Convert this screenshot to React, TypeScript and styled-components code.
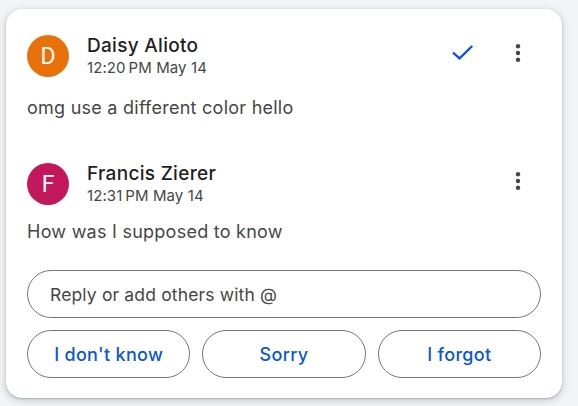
import React from 'react';
import styled, { createGlobalStyle } from 'styled-components';

const GlobalStyle = createGlobalStyle`
  html, body {
    margin: 0;
    padding: 0;
    background: #f2f4f7;
    font-family: Inter, Roboto, Arial, sans-serif;
  }
  * {
    box-sizing: border-box;
  }
`;

const Page = styled.div`
  width: 578px;
  height: 406px;
  padding: 9px 16px 0 6px;
`;

const Card = styled.div`
  width: 556px;
  height: 389px;
  background: #ffffff;
  border-radius: 16px;
  box-shadow: 0 1px 2px rgba(60, 64, 67, 0.3), 0 2px 6px 2px rgba(60, 64, 67, 0.15);
  padding: 26px 21px 20px 21px;
  display: flex;
  flex-direction: column;
`;

const Comment = styled.div<{ $gap: number }>`
  display: flex;
  flex-direction: column;
  gap: ${(p) => p.$gap}px;
  & + & {
    margin-top: 43px;
  }
`;

const Header = styled.div`
  display: flex;
  align-items: flex-start;
`;

const Avatar = styled.div<{ $color: string }>`
  width: 42px;
  height: 42px;
  border-radius: 50%;
  background: ${(p) => p.$color};
  color: #ffffff;
  font-family: Roboto, sans-serif;
  font-size: 23px;
  display: flex;
  align-items: center;
  justify-content: center;
  flex-shrink: 0;
`;

const Meta = styled.div`
  margin-left: 18px;
  margin-top: -1px;
  flex: 1;
  display: flex;
  flex-direction: column;
`;

const Name = styled.div`
  font-size: 19px;
  line-height: 24px;
  font-weight: 500;
  letter-spacing: 0.3px;
  color: #1f1f1f;
`;

const Time = styled.div`
  font-size: 15px;
  line-height: 20px;
  letter-spacing: 0.1px;
  color: #444746;
`;

const Actions = styled.div`
  display: flex;
  gap: 8px;
  margin-top: -6px;
  margin-right: -1px;
`;

const IconButton = styled.button`
  width: 48px;
  height: 48px;
  border: none;
  background: transparent;
  padding: 0;
  display: flex;
  align-items: center;
  justify-content: center;
  border-radius: 50%;
`;

const Body = styled.div`
  font-size: 18px;
  line-height: 24px;
  letter-spacing: 0.25px;
  color: #444746;
`;

const Reply = styled.div`
  margin-top: 26px;
  height: 49px;
  border: 1px solid #747775;
  border-radius: 25px;
  padding: 0 22px;
  display: flex;
  align-items: center;
  font-size: 17.5px;
  letter-spacing: 0.15px;
  color: #444746;
`;

const Suggestions = styled.div`
  margin-top: 12px;
  display: grid;
  grid-template-columns: repeat(3, 1fr);
  gap: 12px;
`;

const Chip = styled.button`
  height: 48px;
  border: 1px solid #747775;
  border-radius: 24px;
  background: #ffffff;
  font-family: inherit;
  font-size: 18px;
  font-weight: 500;
  letter-spacing: 0.3px;
  color: #0b57d0;
`;

const CheckIcon = () => (
  <svg width="24" height="24" viewBox="0 0 24 24">
    <path d="M3 11.6 L9.6 17.4 L22.2 5" fill="none" stroke="#0b57d0" strokeWidth="2.4" />
  </svg>
);

const MoreIcon = () => (
  <svg width="24" height="24" viewBox="0 0 24 24" fill="#444746">
    <circle cx="12" cy="5.2" r="2.2" />
    <circle cx="12" cy="12" r="2.2" />
    <circle cx="12" cy="18.8" r="2.2" />
  </svg>
);

type commentProps = {
  initial: string;
  color: string;
  name: string;
  time: string;
  text: string;
  gap: number;
  resolvable?: boolean;
};

const CommentItem = ({ initial, color, name, time, text, gap, resolvable }: commentProps) => (
  <Comment $gap={gap}>
    <Header>
      <Avatar $color={color}>{initial}</Avatar>
      <Meta>
        <Name>{name}</Name>
        <Time>{time}</Time>
      </Meta>
      <Actions>
        {resolvable && (
          <IconButton>
            <CheckIcon />
          </IconButton>
        )}
        <IconButton>
          <MoreIcon />
        </IconButton>
      </Actions>
    </Header>
    <Body>{text}</Body>
  </Comment>
);

export default function App() {
  return (
    <Page>
      <GlobalStyle />
      <Card>
        <CommentItem
          initial="D"
          color="#e8710a"
          name="Daisy Alioto"
          time={'12:20\u202fPM May 14'}
          text="omg use a different color hello"
          gap={18}
          resolvable
        />
        <CommentItem
          initial="F"
          color="#c2185b"
          name="Francis Zierer"
          time={'12:31\u202fPM May 14'}
          text="How was I supposed to know"
          gap={14}
        />
        <Reply>Reply or add others with @</Reply>
        <Suggestions>
          <Chip>I don't know</Chip>
          <Chip>Sorry</Chip>
          <Chip>I forgot</Chip>
        </Suggestions>
      </Card>
    </Page>
  );
}
